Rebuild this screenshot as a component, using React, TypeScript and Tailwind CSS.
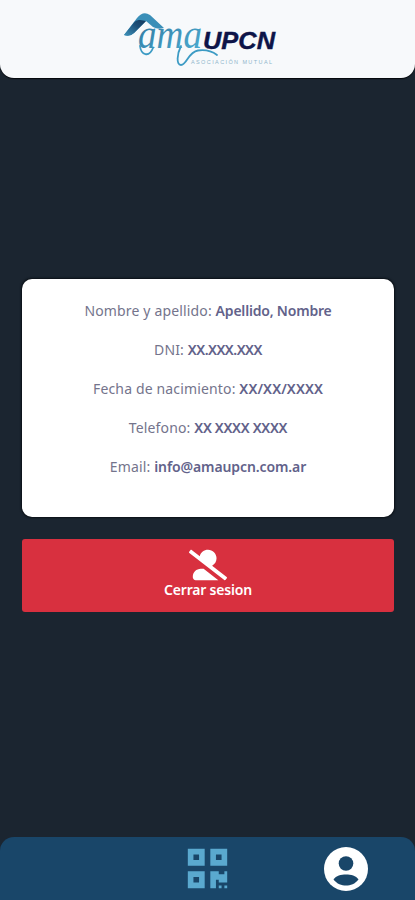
import React from 'react';
import { FaQrcode, FaUserAltSlash } from 'react-icons/fa';

const fields = [
  { label: 'Nombre y apellido:', value: 'Apellido, Nombre', tracking: 'tracking-[-0.2px]' },
  { label: 'DNI:', value: 'XX.XXX.XXX', tracking: 'tracking-[-0.5px]' },
  { label: 'Fecha de nacimiento:', value: 'XX/XX/XXXX', tracking: 'tracking-[0.1px]' },
  { label: 'Telefono:', value: 'XX XXXX XXXX', tracking: 'tracking-[-0.3px]' },
  { label: 'Email:', value: 'info@amaupcn.com.ar', tracking: 'tracking-[-0.1px]' },
];

const Logo: React.FC = () => (
  <svg width="156" height="58" viewBox="0 0 156 58" className="block overflow-visible" role="img" aria-label="AMA UPCN">
    <defs>
      <linearGradient id="roofLeft" x1="0" y1="1" x2="1" y2="0">
        <stop offset="0" stopColor="#3f93bb" />
        <stop offset="0.6" stopColor="#1c4f78" />
        <stop offset="1" stopColor="#153a5e" />
      </linearGradient>
      <linearGradient id="script" x1="0" y1="0" x2="1" y2="1">
        <stop offset="0" stopColor="#2c739c" />
        <stop offset="1" stopColor="#4fb0d4" />
      </linearGradient>
    </defs>
    {/* Roof */}
    <path d="M3 23 L16 6 Q22 -1.500 29 3 L43 16 Q37 18 32 15 L25 9 L13 21 Q9 25 3 23Z" fill="#3a8fb8" />
    <path d="M3 23 L13 10.500 Q15 7.500 19 8 L25 9 L13 21 Q9 25 3 23Z" fill="url(#roofLeft)" />
    <text
      x="17"
      y="36"
      textLength="64"
      lengthAdjust="spacingAndGlyphs"
      fontSize="41"
      fontStyle="italic"
      fill="url(#script)"
      className="font-['Liberation_Serif',serif]"
    >
      ama
    </text>
    {/* Swashes */}
    <path d="M19 34 C20 43 28 46 32 36" fill="none" stroke="#3c9bc4" strokeWidth="1.8" strokeLinecap="round" />
    <path d="M60 34 C56 42 55 53 60 53 C66 53 67 40 77 38.500 Q88 37 96 43" fill="none" stroke="#3c9bc4" strokeWidth="1.8" strokeLinecap="round" />
    <text
      x="82"
      y="37"
      textLength="72"
      lengthAdjust="spacingAndGlyphs"
      fontSize="24"
      fontWeight="700"
      fontStyle="italic"
      fill="#0d1448"
      stroke="#0d1448"
      strokeWidth="0.4"
      className="font-['Liberation_Sans',sans-serif]"
    >
      UPCN
    </text>
    <text
      x="70"
      y="51.5"
      textLength="81"
      fontSize="5.5"
      fill="#8fb6cb"
      className="font-['Liberation_Sans',sans-serif]"
    >
      ASOCIACIÓN MUTUAL
    </text>
  </svg>
);

const ProfileIcon: React.FC = () => (
  <svg width="44" height="44" viewBox="0 0 44 44" className="block">
    <circle cx="22" cy="22" r="22" fill="#fff" />
    <circle cx="22" cy="16.5" r="7.3" fill="#194669" />
    <path d="M9.5 32.5 C12 28.5 17 27.5 22 27.5 C27 27.5 32 28.5 34.5 32.5 C31 37 26.5 38.5 22 38.5 C17.5 38.5 13 37 9.5 32.5Z" fill="#194669" />
  </svg>
);

const App: React.FC = () => {
  return (
    <div className="flex h-[900px] w-[415px] flex-col overflow-hidden bg-[#1b2530] font-['Noto_Sans',sans-serif]">
      <header className="flex h-[78px] shrink-0 justify-center rounded-b-[14px] bg-[#f7f9fb] pt-[12px] pr-[17px] shadow-[0_1px_1px_#05080c]">
        <Logo />
      </header>

      <main className="flex flex-1 flex-col pt-[201px] pr-[21px] pl-[22px]">
        {/* Member data */}
        <section className="flex h-[238px] flex-col items-center rounded-[10px] bg-white pt-[22px] text-[14px] text-[#74748c] shadow-[0_0_2px_1px_#0a1016]">
          {fields.map((field) => (
            <p key={field.label} className="h-[39.1px] leading-[20px] tracking-[0.15px] whitespace-nowrap">
              {field.label} <strong className={`font-semibold text-[#62628a] ${field.tracking}`}>{field.value}</strong>
            </p>
          ))}
        </section>

        <button className="mt-[22px] flex h-[73px] flex-col items-center rounded-[3px] bg-[#d8303f] pt-[7px] text-[14px] leading-[20px] font-semibold tracking-[-0.2px] text-white">
          <FaUserAltSlash className="block h-[38px] w-[38px] shrink-0" />
          <span className="-mt-[4px]">Cerrar sesion</span>
        </button>
      </main>

      <nav className="flex h-[63px] shrink-0 items-start rounded-t-[14px] bg-[#194669]">
        <div className="w-[138px]" />
        <div className="flex w-[139px] justify-center pt-[9px]">
          <FaQrcode className="block h-[45px] w-[45px] text-[#5aa9cf]" />
        </div>
        <div className="flex w-[138px] justify-center pt-[10px]">
          <ProfileIcon />
        </div>
      </nav>
    </div>
  );
};

export default App;
